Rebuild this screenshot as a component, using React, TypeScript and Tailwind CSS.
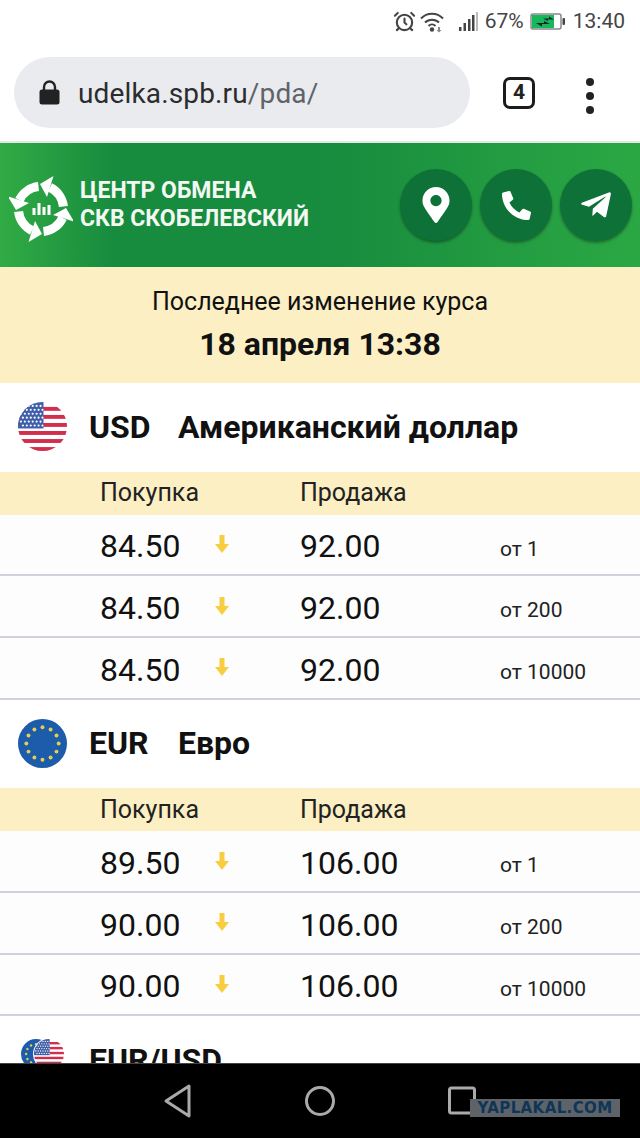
import { AlarmClock } from 'lucide-react'
import { FaMapMarkerAlt, FaPhoneAlt, FaTelegramPlane } from 'react-icons/fa'

type Rate = { buy: string; sell: string; from: string }

const usdRates: Rate[] = [
  { buy: '84.50', sell: '92.00', from: 'от 1' },
  { buy: '84.50', sell: '92.00', from: 'от 200' },
  { buy: '84.50', sell: '92.00', from: 'от 10000' }
]

const eurRates: Rate[] = [
  { buy: '89.50', sell: '106.00', from: 'от 1' },
  { buy: '90.00', sell: '106.00', from: 'от 200' },
  { buy: '90.00', sell: '106.00', from: 'от 10000' }
]

function UsFlag({ size, id }: { size: number; id: string }) {
  const stripes = [0, 1, 2, 3, 4, 5]
  const stars: [number, number][] = []
  for (let r = 0; r < 6; r++) {
    for (let c = 0; c < 6; c++) {
      stars.push([3 + c * 4 + (r % 2 ? 2 : 0), 4 + r * 4])
    }
  }
  return (
    <svg width={size} height={size} viewBox="0 0 50 50">
      <clipPath id={id}>
        <circle cx="25" cy="25" r="25" />
      </clipPath>
      <g clipPath={`url(#${id})`}>
        <rect width="50" height="50" fill="#fff" />
        {stripes.map(i => (
          <rect key={i} y={i * 8.2 + 5} width="50" height="4" fill="#d22f4e" />
        ))}
        <rect width="26" height="27" fill="#3f5fa8" />
        {stars.map(([x, y], i) => (
          <circle key={i} cx={x} cy={y} r="1.1" fill="#fff" />
        ))}
      </g>
    </svg>
  )
}

function EuFlag({ size }: { size: number }) {
  const stars = Array.from({ length: 12 }, (_, i) => i * 30)
  return (
    <svg width={size} height={size} viewBox="0 0 50 50">
      <circle cx="25" cy="25" r="25" fill="#1c5cab" />
      {stars.map(a => (
        <circle
          key={a}
          cx={25 + 16.5 * Math.sin((a * Math.PI) / 180)}
          cy={25 - 16.5 * Math.cos((a * Math.PI) / 180)}
          r="2"
          fill="#e3cf55"
        />
      ))}
    </svg>
  )
}

function Logo() {
  const turns = [0, 90, 180, 270]
  return (
    <svg width="64" height="66" viewBox="-32 -33 64 66" className="mt-[7px] shrink-0">
      {turns.map(t => (
        <g key={t} transform={`rotate(${t})`}>
          <path d="M22.4 -2.5 A24 24 0 0 0 9 -21.6" fill="none" stroke="#fff" strokeWidth="9" />
          <path d="M-1 -25 L12.5 -33 L6 -12 Z" fill="#fff" />
        </g>
      ))}
      <rect x="-8.5" y="-1" width="3" height="7" fill="#fff" />
      <rect x="-3.5" y="-6" width="3" height="12" fill="#fff" />
      <rect x="1.5" y="-2" width="3" height="8" fill="#fff" />
      <rect x="6.5" y="-4" width="3" height="10" fill="#fff" />
    </svg>
  )
}

function StatusBar() {
  return (
    <div className="flex h-[43px] items-center justify-end pr-[15px] text-[21px] text-[#444]">
      <AlarmClock size={23} strokeWidth={2.2} className="mr-[4px]" />
      <svg width="26" height="22" viewBox="0 0 26 22" className="mr-[13px]">
        <g fill="none" stroke="#444" strokeWidth="2">
          <path d="M1 7.5 A15 15 0 0 1 23 7.5" />
          <path d="M5 11.5 A10 10 0 0 1 19 11.5" />
          <path d="M8.5 15 A5 5 0 0 1 15.5 15" />
        </g>
        <circle cx="12" cy="18.5" r="2.2" fill="#444" />
        <path d="M18 16 h2 v3 h1.5 l-2.5 2.5 -2.5 -2.5 h1.5z" fill="#888" />
      </svg>
      <svg width="20" height="22" viewBox="0 0 20 22" className="mr-[6px]">
        <rect x="0" y="16" width="2.5" height="4" fill="#444" />
        <rect x="4.5" y="12" width="2.5" height="8" fill="#444" />
        <rect x="9" y="8" width="2.5" height="12" fill="#444" />
        <rect x="13" y="4" width="2.5" height="16" fill="#444" />
        <rect x="17" y="1" width="2" height="19" fill="#bbb" />
      </svg>
      <span className="mr-[6px]">67%</span>
      <svg width="36" height="20" viewBox="0 0 36 20" className="mr-[7px]">
        <rect x="1" y="2" width="30" height="15" rx="2" fill="#fff" stroke="#888" strokeWidth="1.5" />
        <rect x="2" y="3" width="22" height="13" fill="#16b85a" />
        <rect x="32.5" y="6" width="2.5" height="7" rx="1" fill="#444" />
        <path d="M6 11 h8 v-2 l6 3 h-8 v2.5z M13 6.5 h6 v-2 l5 3 h-6 v1.5z" fill="#123" />
      </svg>
      <span>13:40</span>
    </div>
  )
}

function Toolbar() {
  return (
    <div className="flex h-[100px] items-start border-b-2 border-[#e4e8e4] pt-[14px]">
      <div className="ml-[14px] flex h-[71px] w-[456px] items-center rounded-full bg-[#e9ebef] pl-[25px]">
        <svg width="21" height="25" viewBox="0 0 21 25" className="mr-[18px]">
          <path d="M5 10 V7 A5.5 5.5 0 0 1 16 7 V10" fill="none" stroke="#222" strokeWidth="2.4" />
          <rect x="0.5" y="9.5" width="20" height="15" rx="2.5" fill="#222" />
        </svg>
        <span className="pt-[2px] text-[28px] tracking-[0.15px] text-[#2c2c2e]">
          udelka.spb.ru<span className="text-[#5f6368]">/pda/</span>
        </span>
      </div>
      <div className="ml-[33px] mt-[20px] flex h-[32px] w-[32px] items-center justify-center rounded-[7px] border-[3.5px] border-[#1c1c1c] text-[21px] font-bold text-[#222]">
        4
      </div>
      <div className="ml-[51px] mt-[21px] flex flex-col gap-[6px]">
        <span className="h-[8px] w-[8px] rounded-full bg-[#222]" />
        <span className="h-[8px] w-[8px] rounded-full bg-[#222]" />
        <span className="h-[8px] w-[8px] rounded-full bg-[#222]" />
      </div>
    </div>
  )
}

function RoundButton({ children }: { children: React.ReactNode }) {
  return (
    <div className="flex h-[72px] w-[72px] items-center justify-center rounded-full bg-[#0e7138] text-white shadow-[0_2px_3px_rgba(0,0,0,0.35)]">
      {children}
    </div>
  )
}

function SiteHeader() {
  return (
    <div className="flex h-[124px] items-center bg-[linear-gradient(90deg,#31ab45_0%,#178b3e_18%,#178b3e_50%,#2ba844_100%)] pl-[9px] pr-[8px]">
      <Logo />
      <div className="ml-[7px] text-[23px] font-bold leading-[28px] text-[#f2f8f2]">
        <div>ЦЕНТР ОБМЕНА</div>
        <div>СКВ СКОБЕЛЕВСКИЙ</div>
      </div>
      <div className="ml-auto flex gap-[8px]">
        <RoundButton>
          <FaMapMarkerAlt size={36} />
        </RoundButton>
        <RoundButton>
          <FaPhoneAlt size={29} />
        </RoundButton>
        <RoundButton>
          <FaTelegramPlane size={34} />
        </RoundButton>
      </div>
    </div>
  )
}

function CurrencyBlock({ flag, code, name, rates }: { flag: React.ReactNode; code: string; name: string; rates: Rate[] }) {
  return (
    <div>
      <div className="flex h-[88.6px] items-center pb-[1px] pl-[18px] text-[32px] font-bold text-[#111]">
        <div className="h-[49px] w-[49px] shrink-0">{flag}</div>
        <span className="ml-[22px] w-[89px]">{code}</span>
        <span>{name}</span>
      </div>
      <div className="flex h-[43px] items-center bg-[#fbefc3] pb-[1px] pl-[100px] text-[25px] text-[#222]">
        <span className="w-[200px]">Покупка</span>
        <span>Продажа</span>
      </div>
      {rates.map((r, i) => (
        <div key={i} className="flex h-[61.7px] items-center border-b-2 border-[#d2d0dc] bg-[#fdfdfd] pl-[100px] pt-[4px] text-[#111]">
          <div className="flex w-[200px] items-center text-[32px]">
            <span className="w-[115px]">{r.buy}</span>
            <svg width="14" height="18" viewBox="0 0 14 18" className="-mt-[5px]">
              <path d="M4.5 0 H9.5 V9 H14 L7 18 L0 9 H4.5 Z" fill="#f8ce40" />
            </svg>
          </div>
          <span className="w-[200px] text-[32px]">{r.sell}</span>
          <span className="pt-[6px] text-[21px] text-[#222]">{r.from}</span>
        </div>
      ))}
    </div>
  )
}

function NavBar() {
  return (
    <div className="relative flex h-[75px] shrink-0 items-center justify-center border-t border-[#444] bg-black">
      <svg width="320" height="40" viewBox="0 0 320 40" fill="none" stroke="#aaa" strokeWidth="3" strokeLinejoin="round">
        <path d="M29 5 L6 20 L29 35 Z" />
        <circle cx="160" cy="20" r="13.5" />
        <rect x="289.5" y="7" width="25" height="25" rx="2" />
      </svg>
      <div className="absolute left-[470px] top-[35px] flex h-[18px] w-[150px] items-center justify-center bg-[#5d6368] font-['DejaVu_Sans'] text-[15px] font-bold tracking-[0.4px] text-[#0f3557]">
        YAPLAKAL.COM
      </div>
    </div>
  )
}

export default function App() {
  return (
    <div className="flex h-[1138px] w-[640px] flex-col overflow-hidden bg-white font-['Roboto',sans-serif]">
      <div className="min-h-0 flex-1 overflow-hidden">
        <StatusBar />
        <Toolbar />
        <SiteHeader />
        <div className="flex h-[116px] flex-col items-center bg-[#fbefc3] pt-[18px] text-[#111]">
          <div className="text-[25px] leading-[34px]">Последнее изменение курса</div>
          <div className="mt-[5px] text-[32px] font-bold leading-[40px]">18 апреля 13:38</div>
        </div>
        <CurrencyBlock flag={<UsFlag size={49} id="usd" />} code="USD" name="Американский доллар" rates={usdRates} />
        <CurrencyBlock flag={<EuFlag size={49} />} code="EUR" name="Евро" rates={eurRates} />
        <div className="flex h-[89px] items-center pb-[2px] pl-[21px] text-[32px] font-bold text-[#111]">
          <div className="relative -mt-[12px] h-[30px] w-[44px] shrink-0">
            <EuFlag size={30} />
            <div className="absolute left-[12px] -top-[1px] rounded-full bg-white p-[1px]">
              <UsFlag size={30} id="pair" />
            </div>
          </div>
          <span className="ml-[24px]">EUR/USD</span>
        </div>
      </div>
      <NavBar />
    </div>
  )
}
